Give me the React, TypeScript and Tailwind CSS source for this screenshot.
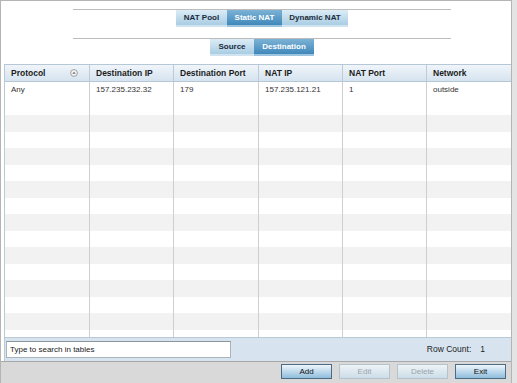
import React from 'react'

const font = { fontFamily: '"Liberation Sans", Arial, sans-serif' }

const COLUMNS = ['Protocol', 'Destination IP', 'Destination Port', 'NAT IP', 'NAT Port', 'Network']
const ROW = ['Any', '157.235.232.32', '179', '157.235.121.21', '1', 'outside']
const GRID = 'grid grid-cols-[85px_84px_85px_84px_84px_1fr]'

function Tab({ label, active, w }: { label: string; active?: boolean; w: string }) {
  return (
    <div
      className={`${w} h-[17px] flex items-center justify-center text-[8px] font-bold border-b-2 ${
        active
          ? 'bg-gradient-to-b from-[#7cb2d6] to-[#3f88ba] text-white border-[#9cc4de]'
          : 'bg-gradient-to-b from-[#dcecf6] to-[#a9cde3] text-[#1b2b3b] border-[#cfe3f0]'
      }`}
    >
      {label}
    </div>
  )
}

function SortIcon() {
  return (
    <svg width="8" height="8" viewBox="0 0 8 8">
      <circle cx="4" cy="4" r="3.4" fill="#f4f4f4" stroke="#8a8a8a" strokeWidth="0.8" />
      <path d="M2.3 4.8 L4 2.8 L5.7 4.8 Z" fill="#6a6a6a" />
    </svg>
  )
}

function Button({ label, disabled }: { label: string; disabled?: boolean }) {
  return (
    <div
      className={`w-[51px] h-[15px] flex items-center justify-center text-[8px] border ${
        disabled
          ? 'bg-gradient-to-b from-[#eef3f6] to-[#ccdde8] border-[#b4c2cc] text-[#9aa4ab]'
          : 'bg-gradient-to-b from-[#eef6fc] to-[#8fbddc] border-[#4d6b82] text-[#111]'
      }`}
    >
      {label}
    </div>
  )
}

export default function App() {
  const rows = Array.from({ length: 16 })

  return (
    <div className="w-[517px] h-[383px] flex bg-[#e4e4e4] overflow-hidden" style={font}>
      <div className="w-[512px] h-full flex flex-col bg-white border-l border-t border-r border-[#b4b4b4]">
        {/* Tabs */}
        <div className="h-[63px] pt-[8px] pl-[12px] flex flex-col items-center">
          <div className="w-[378px] h-px bg-[#bcbcbc]" />
          <div className="flex">
            <Tab label="NAT Pool" w="w-[51px]" />
            <Tab label="Static NAT" w="w-[55px]" active />
            <Tab label="Dynamic NAT" w="w-[66px]" />
          </div>
          <div className="w-[378px] h-px bg-[#bcbcbc] mt-[11px]" />
          <div className="flex">
            <Tab label="Source" w="w-[44px]" />
            <Tab label="Destination" w="w-[60px]" active />
          </div>
        </div>

        {/* Table */}
        <div className="ml-[3px] flex flex-col border-l border-[#b9c9d6]">
          <div className={`${GRID} h-[18px] bg-gradient-to-b from-[#f0f5fa] to-[#d5e3ef] border-t border-b border-[#b6c7d6]`}>
            {COLUMNS.map((c, i) => (
              <div
                key={c}
                className={`flex items-center justify-between pl-[6px] pr-[11px] text-[8.5px] font-bold text-[#1c1c1c] ${
                  i < 5 ? 'border-r border-[#bccbd8]' : ''
                }`}
              >
                <span>{c}</span>
                {i === 0 && <SortIcon />}
              </div>
            ))}
          </div>
          <div className="h-[255px] overflow-hidden">
            {rows.map((_, r) => (
              <div
                key={r}
                className={`${GRID} h-[16.5px] ${r >= 2 && r % 2 === 0 ? 'bg-[#f2f2f2]' : 'bg-white'}`}
              >
                {COLUMNS.map((c, i) => (
                  <div
                    key={c}
                    className={`flex items-center pl-[6px] text-[8px] text-[#333] ${
                      i < 5 ? 'border-r border-[#cfcfcf]' : ''
                    }`}
                  >
                    {r === 0 ? ROW[i] : ''}
                  </div>
                ))}
              </div>
            ))}
          </div>
        </div>

        {/* Search panel */}
        <div className="ml-[3px] h-[24px] flex items-center justify-between bg-[#d7e4f0] border-l border-t border-[#b9c9d6] pl-[1px] pr-[26px]">
          <div className="w-[225px] h-[17px] flex items-center bg-white border border-[#a9b4bd] border-t-[#8c959c] pl-[3px] text-[8px] text-[#222]">
            Type to search in tables
          </div>
          <div className="flex items-center gap-[9px] text-[8.5px] text-[#222]">
            <span>Row Count:</span>
            <span>1</span>
          </div>
        </div>

        {/* Buttons */}
        <div className="flex-1 flex items-start justify-end gap-[7px] pt-[2px] pr-[5px] bg-[#d9d9d9] border-t border-[#a8a8a8]">
          <Button label="Add" />
          <Button label="Edit" disabled />
          <Button label="Delete" disabled />
          <Button label="Exit" />
        </div>
      </div>
    </div>
  )
}
